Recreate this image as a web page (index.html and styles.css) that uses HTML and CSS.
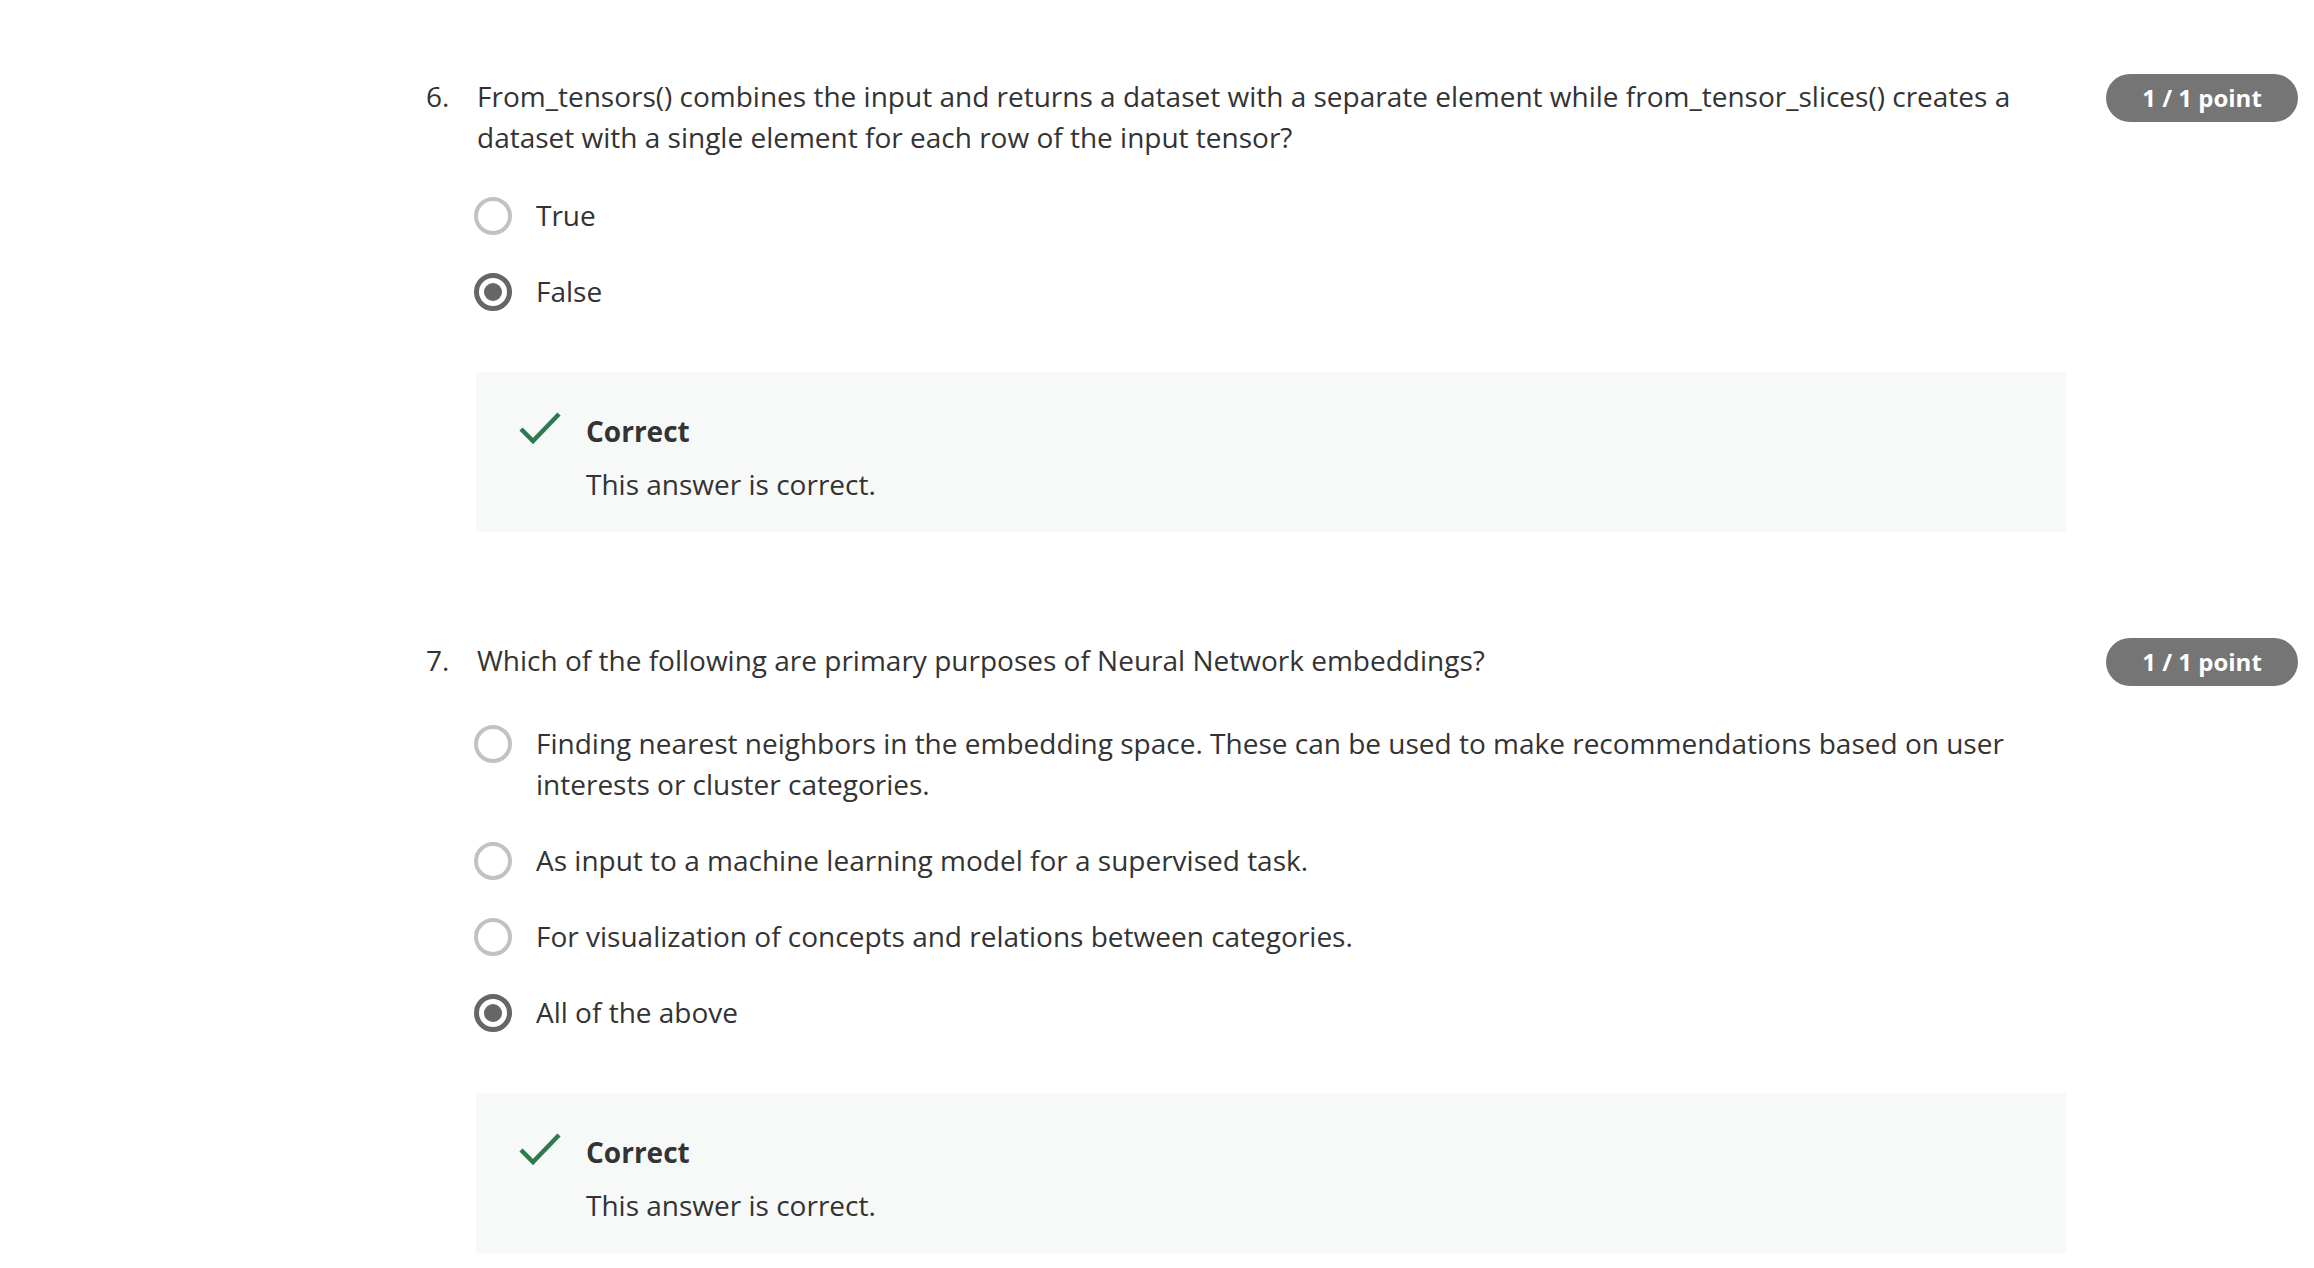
FILE: index.html
```html
<!DOCTYPE html>
<html lang="en">
<head>
<meta charset="utf-8">
<title>Quiz</title>
<link rel="stylesheet" href="styles.css">
</head>
<body>
<main class="quiz">
  <section class="question q6">
    <div class="q-head">
      <span class="q-num">6.</span>
      <div class="q-text">From_tensors() combines the input and returns a dataset with a separate element while from_tensor_slices() creates a dataset with a single element for each row of the input tensor?</div>
      <span class="badge">1 / 1 point</span>
    </div>
    <div class="q-body">
      <ul class="options">
        <li class="option"><span class="radio"></span><span class="opt-text">True</span></li>
        <li class="option"><span class="radio checked"></span><span class="opt-text">False</span></li>
      </ul>
      <div class="feedback">
        <svg class="check" viewBox="0 0 42 32" width="42" height="32"><polyline points="2,17 14,29 40,2" fill="none" stroke="#2e7a50" stroke-width="4.5"/></svg>
        <div class="fb-text">
          <div class="fb-title">Correct</div>
          <div class="fb-body">This answer is correct.</div>
        </div>
      </div>
    </div>
  </section>

  <section class="question q7">
    <div class="q-head">
      <span class="q-num">7.</span>
      <div class="q-text">Which of the following are primary purposes of Neural Network embeddings?</div>
      <span class="badge">1 / 1 point</span>
    </div>
    <div class="q-body">
      <ul class="options">
        <li class="option"><span class="radio"></span><span class="opt-text">Finding nearest neighbors in the embedding space. These can be used to make recommendations based on user interests or cluster categories.</span></li>
        <li class="option"><span class="radio"></span><span class="opt-text">As input to a machine learning model for a supervised task.</span></li>
        <li class="option"><span class="radio"></span><span class="opt-text">For visualization of concepts and relations between categories.</span></li>
        <li class="option"><span class="radio checked"></span><span class="opt-text">All of the above</span></li>
      </ul>
      <div class="feedback">
        <svg class="check" viewBox="0 0 42 32" width="42" height="32"><polyline points="2,17 14,29 40,2" fill="none" stroke="#2e7a50" stroke-width="4.5"/></svg>
        <div class="fb-text">
          <div class="fb-title">Correct</div>
          <div class="fb-body">This answer is correct.</div>
        </div>
      </div>
    </div>
  </section>
</main>
</body>
</html>
```

FILE: styles.css
```css
html, body {
  margin: 0;
  padding: 0;
  background: #ffffff;
}

body {
  font-family: "Open Sans", "DejaVu Sans", sans-serif;
  font-size: 28px;
  line-height: 41px;
  color: #333333;
}

.quiz {
  padding: 74px 16px 0 426px;
}

.question {
  display: flex;
  flex-direction: column;
}

.q7 {
  margin-top: 106px;
}

.q-head {
  display: flex;
  align-items: flex-start;
}

.q-num {
  width: 51px;
  flex: none;
  padding-top: 2px;
}

.q-text {
  width: 1589px;
  flex: none;
  padding-top: 2px;
}

.badge {
  margin-left: auto;
  flex: none;
  width: 192px;
  height: 48px;
  border-radius: 24px;
  background: #757575;
  color: #ffffff;
  font-weight: 700;
  font-size: 24px;
  line-height: 48px;
  text-align: center;
}

.q-body {
  margin-left: 50px;
  width: 1590px;
}

.options {
  list-style: none;
  margin: 37px 0 0;
  padding: 0;
  display: flex;
  flex-direction: column;
  gap: 35px;
}

.option {
  display: flex;
  align-items: flex-start;
}

.radio {
  flex: none;
  box-sizing: border-box;
  width: 38px;
  height: 38px;
  margin-top: 2px;
  margin-left: -2px;
  margin-right: 24px;
  border: 4px solid #c2c2c2;
  border-radius: 50%;
  display: flex;
  align-items: center;
  justify-content: center;
}

.radio.checked {
  border: 5px solid #666666;
}

.radio.checked::after {
  content: "";
  width: 18px;
  height: 18px;
  border-radius: 50%;
  background: #666666;
}

.opt-text {
  flex: 1;
}

.feedback {
  margin-top: 60px;
  background: #f7f9f9;
  padding: 39px 0 27px 43px;
  display: flex;
  align-items: flex-start;
  gap: 25px;
}

.check {
  flex: none;
  margin-top: 1px;
}

.fb-title {
  font-weight: 700;
}

.fb-body {
  margin-top: 12px;
}
```
